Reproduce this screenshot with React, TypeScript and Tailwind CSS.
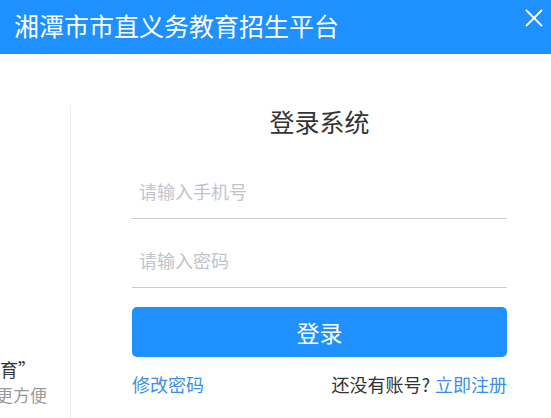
import React from "react";

const font = { fontFamily: '"Noto Sans CJK SC", "Noto Sans", sans-serif' };

export default function App() {
  return (
    <div className="w-[551px] h-[418px] overflow-hidden bg-white relative" style={font}>
      <div className="h-[54px] bg-[#1e90ff] flex items-center pl-[14px] relative">
        <h1 className="text-white text-[25px] leading-none -mt-[3px]">湘潭市市直义务教育招生平台</h1>
        <svg className="absolute left-[525px] top-[9px]" width="18" height="18" viewBox="0 0 18 18">
          <path d="M1 1 L17 17 M17 1 L1 17" stroke="white" strokeWidth="1.8" fill="none" />
        </svg>
      </div>
      <div className="flex">
        <div className="w-[71px] mt-[51px] h-[320px] border-r border-[#eeeeee] overflow-hidden pt-[250px]">
          <div className="text-[18px] leading-[28px] text-[#333] whitespace-nowrap">育”</div>
          <div className="text-[17px] leading-[24px] text-[#999] whitespace-nowrap -ml-[4px]">更方便</div>
        </div>
        <div className="ml-[61px] w-[375px] flex flex-col">
          <div className="mt-[51px] text-center text-[25px] leading-[32px] text-[#333]">登录系统</div>
          <div className="mt-[33px] h-[49px] border-b border-[#cccccc] flex items-center pb-[6px] pl-[7px] text-[18px] text-[#c0c4cc]">
            请输入手机号
          </div>
          <div className="mt-[20px] h-[49px] border-b border-[#cccccc] flex items-center pb-[6px] pl-[7px] text-[18px] text-[#c0c4cc]">
            请输入密码
          </div>
          <button className="mt-[19px] h-[50px] rounded-[5px] bg-[#1e90ff] text-white text-[23px] flex items-center justify-center">
            登录
          </button>
          <div className="mt-[15px] flex justify-between items-center text-[18px] leading-[24px]">
            <span className="text-[#3a8ee6]">修改密码</span>
            <span className="text-[#333]">
              还没有账号?<span className="text-[#3a8ee6] ml-[5px]">立即注册</span>
            </span>
          </div>
        </div>
      </div>
    </div>
  );
}
